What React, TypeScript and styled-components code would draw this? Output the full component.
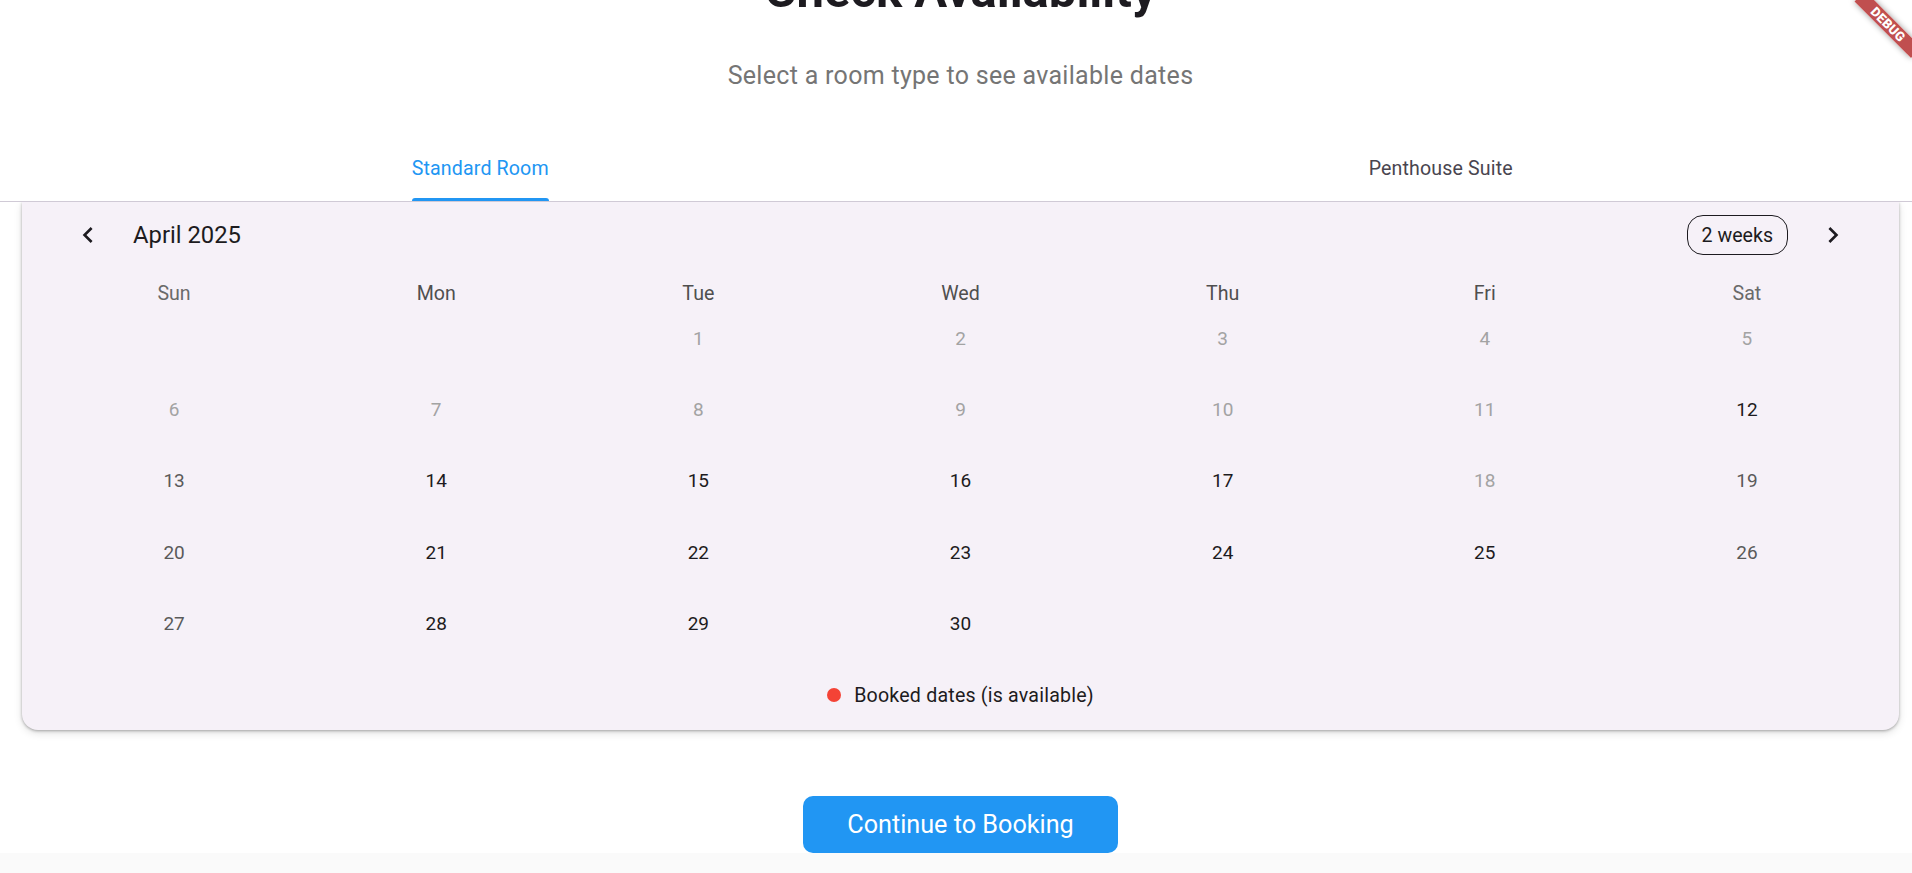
import React, { useLayoutEffect, useRef } from "react";
import styled, { createGlobalStyle } from "styled-components";

const GlobalStyle = createGlobalStyle`
  html, body { margin: 0; padding: 0; background: #ffffff; }
  body { font-family: Roboto, "Noto Sans", "Liberation Sans", sans-serif; overflow: hidden; }
  *, *::before, *::after { box-sizing: border-box; }
`;

const Screen = styled.div`
  position: relative;
  width: 1912px;
  height: 873px;
  overflow: hidden;
  display: flex;
  flex-direction: column;
  background: #ffffff;
`;

const Scroller = styled.div`
  flex: none;
  height: 853px;
  overflow: hidden;
`;

const Content = styled.div`
  width: 1921px;
  padding: 24px 0 80px;
  display: flex;
  flex-direction: column;
`;

const Title = styled.h1`
  margin: 0;
  text-align: center;
  font-size: 49px;
  line-height: 58px;
  font-weight: 700;
  color: #1d1b20;
`;

const Subtitle = styled.p`
  margin: 41px 0 0;
  text-align: center;
  font-size: 25px;
  line-height: 30px;
  letter-spacing: 0.3px;
  color: #757575;
`;

const TabBar = styled.div`
  margin-top: 45px;
  display: grid;
  grid-template-columns: 1fr 1fr;
  border-bottom: 1px solid #d0cad6;
`;

const Tab = styled.div`
  height: 65px;
  display: flex;
  justify-content: center;
`;

const TabLabel = styled.span<{ $active?: boolean }>`
  position: relative;
  display: flex;
  align-items: center;
  font-size: 19.6px;
  font-weight: 400;
  letter-spacing: 0.14px;
  color: ${(p) => (p.$active ? "#2196f3" : "#49454f")};

  &::after {
    content: "";
    display: ${(p) => (p.$active ? "block" : "none")};
    position: absolute;
    left: 0;
    right: 0;
    bottom: 0;
    height: 3px;
    background: #2196f3;
    border-radius: 3px 3px 0 0;
  }
`;

const Panel = styled.div`
  overflow: hidden;
  padding-bottom: 20px;
`;

const Card = styled.section`
  margin: 0 22px;
  background: #f6f1f8;
  border-radius: 0 0 16px 16px;
  box-shadow: 0 1px 3px rgba(0, 0, 0, 0.3), 0 3px 8px rgba(0, 0, 0, 0.12);
  padding: 13px 21px 22.5px;
`;

const HeaderRow = styled.div`
  height: 40px;
  display: flex;
  align-items: center;
  gap: 21px;
  padding: 0 21px;
`;

const NavButton = styled.button`
  width: 48px;
  height: 40px;
  padding: 0;
  border: 0;
  background: none;
  display: flex;
  align-items: center;
  justify-content: center;
  color: #1d1b20;
`;

const MonthTitle = styled.div`
  flex: 1;
  font-size: 23.8px;
  color: #1d1b20;
`;

const FormatPill = styled.div`
  height: 40px;
  padding: 0 14px;
  border: 1.5px solid #1d1b20;
  border-radius: 16px;
  display: flex;
  align-items: center;
  font-size: 19.6px;
  color: #1d1b20;
`;

const DowRow = styled.div`
  margin-top: 29px;
  height: 20px;
  display: grid;
  grid-template-columns: repeat(7, 1fr);
  align-items: center;
`;

const DowLabel = styled.div<{ $weekend?: boolean }>`
  text-align: center;
  font-size: 19.6px;
  line-height: 20px;
  color: ${(p) => (p.$weekend ? "#6a6a6a" : "#4f4f4f")};
`;

const DayGrid = styled.div`
  margin-top: -1px;
  display: grid;
  grid-template-columns: repeat(7, 1fr);
  grid-auto-rows: 71.2px;
`;

type DayKind = "disabled" | "weekend" | "default" | "empty";

const dayColors: Record<DayKind, string> = {
  disabled: "#a3a3a3",
  weekend: "#5a5a5a",
  default: "#1d1b20",
  empty: "transparent",
};

const DayCell = styled.div<{ $kind: DayKind }>`
  display: flex;
  align-items: center;
  justify-content: center;
  font-size: 19px;
  color: ${(p) => dayColors[p.$kind]};
`;

const Legend = styled.div`
  margin-top: 24.5px;
  height: 24px;
  display: flex;
  align-items: center;
  justify-content: center;
  gap: 13px;
`;

const Dot = styled.span`
  width: 14px;
  height: 14px;
  border-radius: 50%;
  background: #f44336;
`;

const LegendText = styled.span`
  font-size: 19.6px;
  letter-spacing: 0.2px;
  color: #1d1b20;
`;

const ButtonRow = styled.div`
  margin-top: 46px;
  display: flex;
  justify-content: center;
`;

const PrimaryButton = styled.button`
  height: 57px;
  padding: 0 44px;
  border: 0;
  border-radius: 10px;
  background: #2196f3;
  color: #ffffff;
  font-family: inherit;
  font-size: 25.2px;
  font-weight: 400;
`;

const BottomBar = styled.div`
  flex: 1;
  background: #fafafa;
`;

const BannerClip = styled.div`
  position: absolute;
  top: 0;
  right: 0;
  width: 100px;
  height: 100px;
  overflow: hidden;
  pointer-events: none;
`;

const Banner = styled.div`
  position: absolute;
  left: 36px;
  top: 16.5px;
  width: 80px;
  height: 15px;
  transform: rotate(45deg);
  background: rgba(178, 40, 40, 0.82);
  box-shadow: 0 0 6px rgba(0, 0, 0, 0.4);
  color: #ffffff;
  font-size: 13px;
  font-weight: 900;
  line-height: 15px;
  letter-spacing: 0.2px;
  text-align: center;
`;

const Chevron = ({ dir }: { dir: "left" | "right" }) => (
  <svg width="32" height="32" viewBox="0 0 24 24" fill="currentColor">
    {dir === "left" ? (
      <path d="M15.41 7.41L14 6l-6 6 6 6 1.41-1.41L10.83 12z" />
    ) : (
      <path d="M10 6L8.59 7.41 13.17 12l-4.58 4.59L10 18l6-6z" />
    )}
  </svg>
);

const DOW = ["Sun", "Mon", "Tue", "Wed", "Thu", "Fri", "Sat"];

function kindFor(day: number, col: number): DayKind {
  if (day <= 11 || day === 18) return "disabled";
  if (day === 12) return "default";
  if (col === 0 || col === 6) return "weekend";
  return "default";
}

export default function App() {
  const scrollRef = useRef<HTMLDivElement>(null);
  useLayoutEffect(() => {
    if (scrollRef.current) scrollRef.current.scrollTop = 62;
  }, []);

  const cells: { day: number | null; col: number }[] = [];
  for (let i = 0; i < 2; i++) cells.push({ day: null, col: i });
  for (let d = 1; d <= 30; d++) cells.push({ day: d, col: (d + 1) % 7 });

  return (
    <Screen>
      <GlobalStyle />
      <Scroller ref={scrollRef}>
        <Content>
          <Title>Check Availability</Title>
          <Subtitle>Select a room type to see available dates</Subtitle>
          <TabBar>
            <Tab>
              <TabLabel $active>Standard Room</TabLabel>
            </Tab>
            <Tab>
              <TabLabel>Penthouse Suite</TabLabel>
            </Tab>
          </TabBar>
          <Panel>
            <Card>
              <HeaderRow>
                <NavButton aria-label="Previous month">
                  <Chevron dir="left" />
                </NavButton>
                <MonthTitle>April 2025</MonthTitle>
                <FormatPill>2 weeks</FormatPill>
                <NavButton aria-label="Next month">
                  <Chevron dir="right" />
                </NavButton>
              </HeaderRow>
              <DowRow>
                {DOW.map((d, i) => (
                  <DowLabel key={d} $weekend={i === 0 || i === 6}>
                    {d}
                  </DowLabel>
                ))}
              </DowRow>
              <DayGrid>
                {cells.map((c, i) =>
                  c.day === null ? (
                    <DayCell key={i} $kind="empty" />
                  ) : (
                    <DayCell key={i} $kind={kindFor(c.day, c.col)}>
                      {c.day}
                    </DayCell>
                  )
                )}
              </DayGrid>
              <Legend>
                <Dot />
                <LegendText>Booked dates (is available)</LegendText>
              </Legend>
            </Card>
          </Panel>
          <ButtonRow>
            <PrimaryButton>Continue to Booking</PrimaryButton>
          </ButtonRow>
        </Content>
      </Scroller>
      <BottomBar />
      <BannerClip>
        <Banner>DEBUG</Banner>
      </BannerClip>
    </Screen>
  );
}
